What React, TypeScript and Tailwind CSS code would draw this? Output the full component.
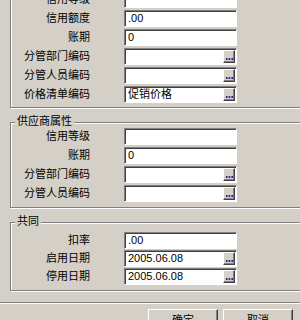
const font = "font-['Liberation_Sans','Noto_Sans_CJK_SC',sans-serif]"

function Picker() {
  return (
    <div className="mr-[1px] flex h-[13px] w-[12px] items-end justify-center border border-t-white border-l-white border-b-[#404040] border-r-[#404040] bg-[#d4d0c8] pb-[2px] shadow-[inset_-1px_-1px_0_#808080]">
      <svg width="7" height="2" viewBox="0 0 7 2">
        <rect x="0" y="0" width="1.6" height="2" fill="#24249a" />
        <rect x="2.7" y="0" width="1.6" height="2" fill="#24249a" />
        <rect x="5.4" y="0" width="1.6" height="2" fill="#24249a" />
      </svg>
    </div>
  )
}

function Field({ value, picker }: { value?: string; picker?: boolean }) {
  return (
    <div className="flex h-[17px] w-[113px] items-center border border-t-[#808080] border-l-[#808080] border-b-white border-r-white bg-white shadow-[inset_1px_1px_0_#404040]">
      <span className={`flex-1 pl-[3px] text-[11px] leading-none text-black ${font}`}>{value}</span>
      {picker && <Picker />}
    </div>
  )
}

function Row({ label, value, picker }: { label: string; value?: string; picker?: boolean }) {
  return (
    <div className="flex items-center">
      <div className={`w-[79px] text-right text-[11px] leading-none text-black ${font}`}>{label}</div>
      <div className="ml-[34px]">
        <Field value={value} picker={picker} />
      </div>
    </div>
  )
}

function Group({ title, className, children }: { title?: string; className: string; children: React.ReactNode }) {
  return (
    <div className={`relative ml-[10px] w-[320px] border border-[#808080] shadow-[inset_1px_1px_0_#fff,1px_1px_0_#fff] ${className}`}>
      {title && (
        <span className={`absolute -top-[7px] left-[4px] bg-[#d4d0c8] px-[2px] text-[11px] leading-none text-black ${font}`}>
          {title}
        </span>
      )}
      {children}
    </div>
  )
}

function Button({ label }: { label: string }) {
  return (
    <div className="flex h-[23px] w-[70px] items-center justify-center border border-t-white border-l-white border-b-[#404040] border-r-[#404040] bg-[#d4d0c8] shadow-[inset_-1px_-1px_0_#808080]">
      <span className={`text-[11px] leading-none text-black ${font}`}>{label}</span>
    </div>
  )
}

export default function App() {
  return (
    <div className="h-[320px] w-[300px] overflow-hidden bg-[#d4d0c8]">
      {/* 客户属性 (cut off above) */}
      <Group className="-mt-[20px] flex flex-col gap-[2px] pt-[10px] pb-[4px]">
        <Row label="信用等级" />
        <Row label="信用额度" value=".00" />
        <Row label="账期" value="0" />
        <Row label="分管部门编码" picker />
        <Row label="分管人员编码" picker />
        <Row label="价格清单编码" value="促销价格" picker />
      </Group>

      <Group title="供应商属性" className="mt-[14px] flex flex-col gap-[2px] pt-[5px] pb-[5px]">
        <Row label="信用等级" />
        <Row label="账期" value="0" />
        <Row label="分管部门编码" picker />
        <Row label="分管人员编码" picker />
      </Group>

      <Group title="共同" className="mt-[14px] flex flex-col gap-[1px] pt-[9px] pb-[5px]">
        <Row label="扣率" value=".00" />
        <Row label="启用日期" value="2005.06.08" picker />
        <Row label="停用日期" value="2005.06.08" picker />
      </Group>

      <div className="mt-[11px] h-[2px] border-t border-[#808080] bg-white" />

      <div className="mt-[5px] flex justify-end gap-[5px] pr-[7px]">
        <Button label="确定" />
        <Button label="取消" />
      </div>
    </div>
  )
}
